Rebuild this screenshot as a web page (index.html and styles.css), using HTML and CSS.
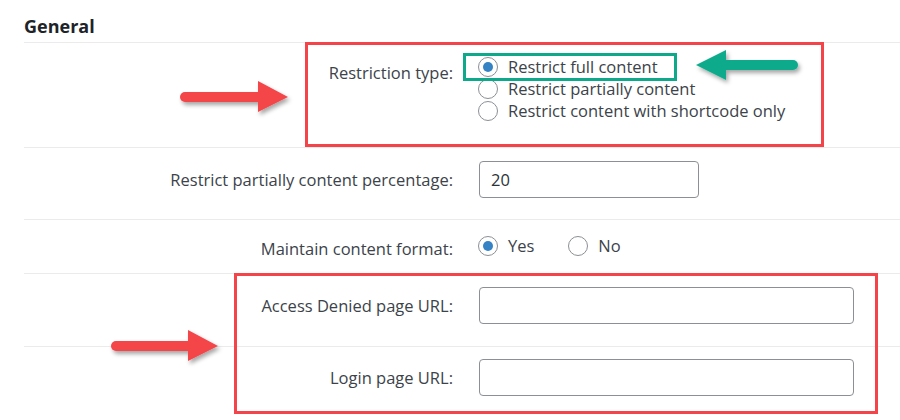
FILE: index.html
```html
<!DOCTYPE html>
<html>
<head>
<meta charset="utf-8">
<link rel="stylesheet" href="styles.css">
</head>
<body>
<div class="page">
  <h2 class="title">General</h2>
  <div class="form">
    <div class="row r1">
      <div class="label">Restriction type:</div>
      <div class="field stack">
        <label class="opt"><input type="radio" name="rt" checked><span>Restrict full content</span></label>
        <label class="opt"><input type="radio" name="rt"><span>Restrict partially content</span></label>
        <label class="opt"><input type="radio" name="rt"><span>Restrict content with shortcode only</span></label>
      </div>
    </div>
    <div class="row r2">
      <div class="label">Restrict partially content percentage:</div>
      <div class="field"><input class="text short" type="text" value="20"></div>
    </div>
    <div class="row r3">
      <div class="label">Maintain content format:</div>
      <div class="field inline">
        <label class="opt"><input type="radio" name="mf" checked><span>Yes</span></label>
        <label class="opt"><input type="radio" name="mf"><span>No</span></label>
      </div>
    </div>
    <div class="row r4">
      <div class="label">Access Denied page URL:</div>
      <div class="field"><input class="text long" type="text" value=""></div>
    </div>
    <div class="row r5">
      <div class="label">Login page URL:</div>
      <div class="field"><input class="text long" type="text" value=""></div>
    </div>
  </div>

  <div class="mark red box1"></div>
  <div class="mark red box2"></div>
  <div class="mark green box3"></div>

  <svg class="arrow a1" width="130" height="50" viewBox="0 0 130 50">
    <defs>
      <filter id="sh1" x="-20%" y="-40%" width="140%" height="180%">
        <feDropShadow dx="2" dy="3" stdDeviation="2" flood-color="#000" flood-opacity="0.35"/>
      </filter>
    </defs>
    <g filter="url(#sh1)" fill="#f44449" stroke="#f44449">
      <line x1="15" y1="22" x2="92" y2="22" stroke-width="10" stroke-linecap="round"/>
      <polygon points="88,6 118,22 88,37" stroke="none"/>
    </g>
  </svg>

  <svg class="arrow a2" width="130" height="50" viewBox="0 0 130 50">
    <defs>
      <filter id="sh2" x="-20%" y="-40%" width="140%" height="180%">
        <feDropShadow dx="2" dy="3" stdDeviation="2" flood-color="#000" flood-opacity="0.35"/>
      </filter>
    </defs>
    <g filter="url(#sh2)" fill="#f44449" stroke="#f44449">
      <line x1="16" y1="21" x2="93" y2="21" stroke-width="10" stroke-linecap="round"/>
      <polygon points="88,5 118,21 88,36" stroke="none"/>
    </g>
  </svg>

  <svg class="arrow a3" width="120" height="45" viewBox="0 0 120 45">
    <defs>
      <filter id="sh3" x="-20%" y="-40%" width="140%" height="180%">
        <feDropShadow dx="2" dy="3" stdDeviation="2" flood-color="#000" flood-opacity="0.35"/>
      </filter>
    </defs>
    <g filter="url(#sh3)" fill="#0bab8c" stroke="#0bab8c">
      <line x1="30" y1="20" x2="103" y2="20" stroke-width="10" stroke-linecap="round"/>
      <polygon points="6,20 36,5 36,35" stroke="none"/>
    </g>
  </svg>
</div>
</body>
</html>
```

FILE: styles.css
```css
* { box-sizing: border-box; }
html, body { margin: 0; padding: 0; background: #fff; }
body {
  font-family: "Open Sans", "Noto Sans", sans-serif;
  font-size: 16.5px;
  color: #3c434a;
}
.page {
  position: relative;
  width: 900px;
  height: 420px;
  padding-left: 24px;
  overflow: hidden;
}
.title {
  margin: 0 0 4px 0;
  padding-top: 14px;
  font-size: 18px;
  line-height: 24px;
  font-weight: 700;
  color: #1d2327;
}
.row {
  display: grid;
  grid-template-columns: 429px 1fr;
  column-gap: 25px;
  border-top: 1px solid #ebebeb;
}
.label {
  text-align: right;
  line-height: 22px;
}
.field { line-height: 22px; }
.opt {
  display: flex;
  align-items: center;
  height: 22px;
}
.inline { display: flex; }
.inline .opt { margin-right: 34px; }
.opt input {
  -webkit-appearance: none;
  appearance: none;
  width: 20px;
  height: 20px;
  margin: 0 10px 0 0;
  border: 1px solid #8c8f94;
  border-radius: 50%;
  background: #fff;
  position: relative;
  flex: none;
}
.opt input:checked::before {
  content: "";
  position: absolute;
  left: 4px;
  top: 4px;
  width: 10px;
  height: 10px;
  border-radius: 50%;
  background: #3582c4;
}
.text {
  display: block;
  height: 37px;
  margin: 0 0 0 1px;
  padding: 0 11px;
  border: 1px solid #8c8f94;
  border-radius: 4px;
  font-family: inherit;
  font-size: 16.5px;
  color: #2c3338;
  background: #fff;
}
.short { width: 220px; }
.long { width: 375px; }

.r1 { height: 105px; }
.r1 .label { padding-top: 19px; }
.r1 .field { padding-top: 13px; }
.r2 { height: 72px; align-items: start; }
.r2 .label { padding-top: 21px; }
.r2 .field { padding-top: 13px; }
.r3 { height: 54px; }
.r3 .label { padding-top: 18px; }
.r3 .field { padding-top: 15px; }
.r4 { height: 73px; }
.r4 .label { padding-top: 21px; }
.r4 .field { padding-top: 13px; }
.r5 { height: 80px; }
.r5 .label { padding-top: 20px; }
.r5 .field { padding-top: 12px; }

.mark { position: absolute; }
.red { border: 3px solid #f44449; }
.green { border: 3px solid #0ea88b; }
.box1 { left: 305px; top: 42px; width: 519px; height: 105px; }
.box2 { left: 234px; top: 273px; width: 644px; height: 141px; }
.box3 { left: 463px; top: 53px; width: 214px; height: 28px; }

.arrow { position: absolute; overflow: visible; }
.a1 { left: 170px; top: 75px; }
.a2 { left: 100px; top: 325px; }
.a3 { left: 690px; top: 45px; }
```
